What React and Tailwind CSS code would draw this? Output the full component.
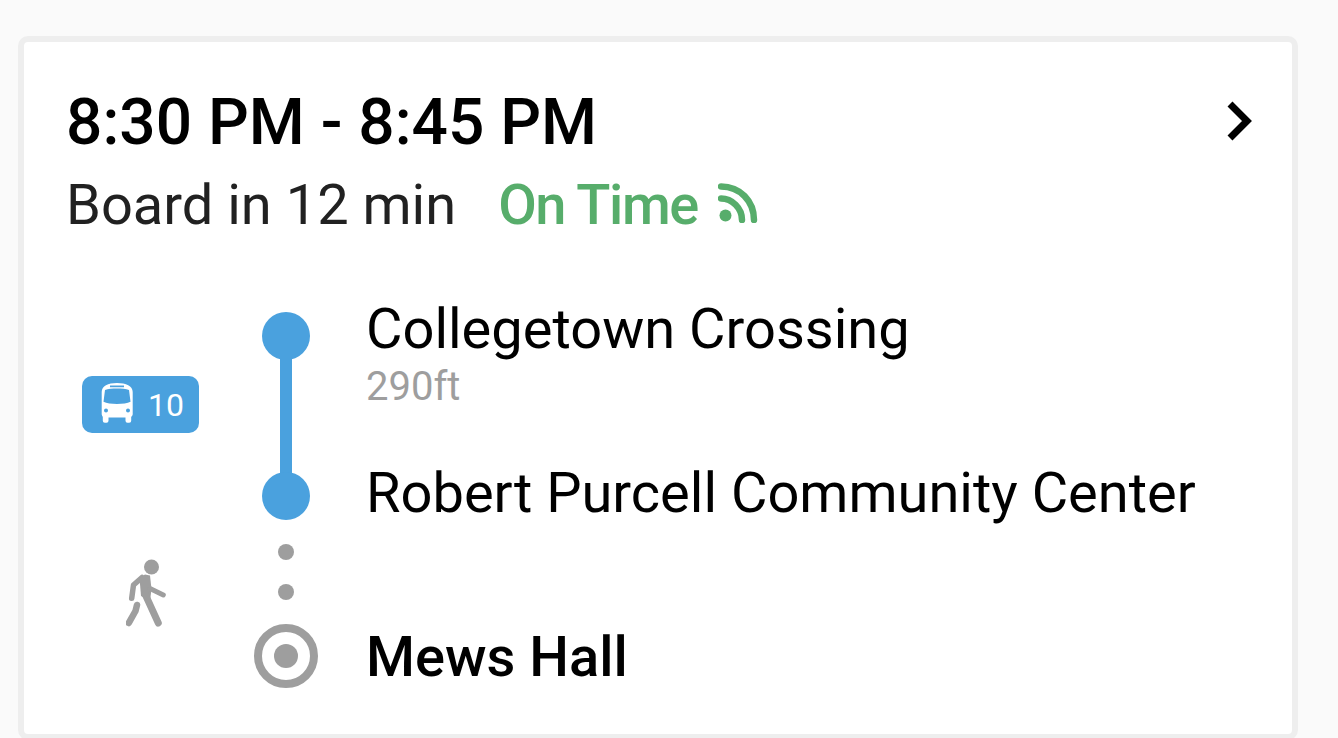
import React from "react";

const BusIcon = () => (
  <svg width="34" height="40" viewBox="0 0 34 40" fill="none" className="-mt-[3px]">
    <path
      fillRule="evenodd"
      d="M1.700 9C1.700 3 8 0 17 0s15.700 3 15.700 9V31c0 1.200-.5 2.200-1.500 2.800V37.700a2 2 0 0 1-2 2h-1.700a2 2 0 0 1-2-2V34.500H8.500v3.200a2 2 0 0 1-2 2H4.800a2 2 0 0 1-2-2V33.800C2.200 33.200 1.700 32.200 1.700 31ZM5 7 3.500 18.700c3 1.300 8 2.300 13.500 2.300s10.500-1 13.500-2.300L29 7C26 6 21.500 5.600 17 5.600S8 6 5 7ZM4 27.500a2 2 0 1 0 4 0 2 2 0 1 0-4 0Zm22 0a2 2 0 1 0 4 0 2 2 0 1 0-4 0ZM10 2.600h14v1.600H10Z"
      fill="#fff"
    />
  </svg>
);

const WalkIcon = () => (
  <svg width="42" height="68" viewBox="0 0 42 68" fill="none">
    <circle cx="25.500" cy="8" r="7.500" fill="#9e9e9e" />
    <path d="M16 18.500 7.500 26 5.700 39.300" stroke="#9e9e9e" strokeWidth="5.500" strokeLinecap="round" strokeLinejoin="round" />
    <path d="M13.500 19 19 15.500 24 16.500 25.500 30 24 42 15 37Z" fill="#9e9e9e" />
    <path d="M24 29.500 37.300 36" stroke="#9e9e9e" strokeWidth="5" strokeLinecap="round" />
    <path d="M19.500 36 32.300 64" stroke="#9e9e9e" strokeWidth="7" strokeLinecap="round" />
    <path d="M11 46 9.500 52 2.800 64" stroke="#9e9e9e" strokeWidth="6.500" strokeLinecap="round" strokeLinejoin="round" />
  </svg>
);

const RssIcon = () => (
  <svg width="40" height="40" viewBox="0 0 40 40" fill="none">
    <circle cx="7.500" cy="32.500" r="6" fill="#57ad6b" />
    <path d="M3 15.500C14 15.500 24 25 24 37" stroke="#57ad6b" strokeWidth="6.500" strokeLinecap="round" />
    <path d="M3 3.500C22 3.500 36 18 36 37" stroke="#57ad6b" strokeWidth="6.500" strokeLinecap="round" />
  </svg>
);

export default function App() {
  return (
    <div className="h-[738px] overflow-hidden bg-[#fafafa] pt-[36px] px-[18px] font-['Roboto',sans-serif]">
      <div className="w-[1280px] h-[704px] bg-white border-[6px] border-[#eeeeee] rounded-[10px] pl-[42px] pr-[39px]">
        <div className="flex items-center justify-between pt-[43px]">
          <div className="text-[64px] leading-[76px] font-medium text-black">8:30 PM - 8:45 PM</div>
          <svg width="26" height="40" viewBox="0 0 26 40" fill="none" className="-mt-[4px]">
            <path d="M3 3 20 20 3 37" stroke="#000" strokeWidth="7" />
          </svg>
        </div>
        <div className="flex items-center mt-[16px] h-[56px]">
          <span className="text-[56px] text-[#212121]">Board in 12 min</span>
          <span className="ml-[42px] text-[56px] font-medium tracking-[-1.4px] text-[#57ad6b]">On Time</span>
          <span className="ml-[20px] -mt-[4px]">
            <RssIcon />
          </span>
        </div>

        <div className="flex mt-[63px]">
          <div className="w-[188px] flex flex-col items-start">
            <div className="mt-[80px] ml-[16px] w-[117px] h-[57px] rounded-[10px] bg-[#4aa1de] flex items-center pl-[18px] gap-[14px]">
              <BusIcon />
              <span className="text-[32px] text-white">10</span>
            </div>
            <div className="mt-[126px] ml-[60px]">
              <WalkIcon />
            </div>
          </div>

          <div className="w-[64px] flex flex-col items-center pt-[16px]">
            <div className="w-[48px] h-[48px] rounded-full bg-[#4aa1de] shrink-0" />
            <div className="w-[12px] h-[114px] -my-[1px] bg-[#4aa1de] shrink-0" />
            <div className="w-[48px] h-[48px] rounded-full bg-[#4aa1de] shrink-0" />
            <div className="w-[16px] h-[16px] rounded-full bg-[#9e9e9e] mt-[24px] shrink-0" />
            <div className="w-[16px] h-[16px] rounded-full bg-[#9e9e9e] mt-[24px] shrink-0" />
            <div className="w-[64px] h-[64px] rounded-full border-[8px] border-[#9e9e9e] mt-[24px] flex items-center justify-center shrink-0">
              <div className="w-[24px] h-[24px] rounded-full bg-[#9e9e9e]" />
            </div>
          </div>

          <div className="ml-[48px] flex flex-col">
            <div className="text-[56px] leading-[66px] text-black whitespace-nowrap">Collegetown Crossing</div>
            <div className="mt-[2px] text-[40px] leading-[46px] text-[#9e9e9e]">290ft</div>
            <div className="mt-[50px] text-[56px] leading-[66px] text-black whitespace-nowrap">Robert Purcell Community Center</div>
            <div className="mt-[98px] text-[56px] leading-[66px] font-medium text-black">Mews Hall</div>
          </div>
        </div>
      </div>
    </div>
  );
}
